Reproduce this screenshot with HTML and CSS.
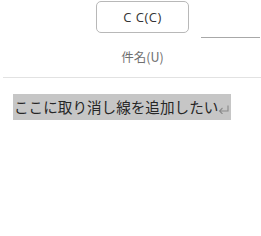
FILE: index.html
```html
<!DOCTYPE html>
<html>
<head>
<meta charset="utf-8">
<link rel="stylesheet" href="styles.css">
</head>
<body>
<div class="header">
  <div class="col">
    <div class="btn">C C(C)</div>
    <div class="label">件名(U)</div>
  </div>
  <div class="field"></div>
</div>
<div class="body">
  <span class="mark">ここに取り消し線を追加したい<svg class="ret" width="11" height="9" viewBox="0 0 11 9"><path d="M10 0.5 V6 H1.5 M4.5 3 L1.5 6 L4.5 9" fill="none" stroke="#8a8a8a" stroke-width="1.1"/></svg></span>
</div>
</body>
</html>
```
FILE: styles.css
```css
html, body {
  margin: 0;
  padding: 0;
  background: #ffffff;
}
body {
  font-family: "Noto Sans CJK JP", "Noto Sans", sans-serif;
  width: 261px;
  height: 236px;
  overflow: hidden;
}
.header {
  display: flex;
  align-items: flex-start;
  margin-left: 3px;
  padding-left: 93px;
  padding-top: 1px;
  height: 76px;
  border-bottom: 1px solid #e2e2e2;
}
.col {
  display: flex;
  flex-direction: column;
  align-items: center;
  width: 93px;
}
.btn {
  box-sizing: border-box;
  width: 93px;
  height: 32px;
  border: 1px solid #b8b8b8;
  border-radius: 5px;
  display: flex;
  align-items: center;
  justify-content: center;
  font-family: "Open Sans", "Noto Sans", sans-serif;
  font-size: 13px;
  color: #333;
  letter-spacing: 0.5px;
}
.label {
  margin-top: 16px;
  font-size: 12.5px;
  line-height: 16px;
  color: #707070;
}
.field {
  margin-left: 12px;
  margin-top: 36px;
  width: 59px;
  border-bottom: 1px solid #a8a8a8;
}
.body {
  padding: 16px 0 0 13px;
}
.mark {
  display: inline-block;
  background: #c6c6c6;
  font-size: 14.6px;
  line-height: 26px;
  color: #262626;
  padding: 0 2px 0 1px;
}
.ret {
  vertical-align: -1px;
  margin-left: 0;
}
```
